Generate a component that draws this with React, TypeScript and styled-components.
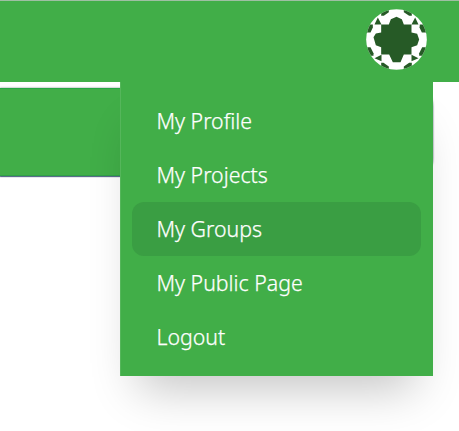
import React from 'react';
import styled, { createGlobalStyle } from 'styled-components';

const GlobalStyle = createGlobalStyle`
  * { box-sizing: border-box; }
  html, body { margin: 0; background: #fff; overflow: hidden; }
  body { font-family: 'Noto Sans', sans-serif; }
`;

const Page = styled.div`
  position: relative;
  width: 459px;
  height: 431px;
  overflow: hidden;
  background: #fff;
`;

const Header = styled.header`
  display: flex;
  justify-content: flex-end;
  align-items: flex-start;
  height: 82px;
  padding: 8px 32px 0 0;
  border-top: 1px solid #9fbfa3;
  background: #41ae48;
`;

const AvatarButton = styled.button`
  width: 61px;
  height: 61px;
  padding: 0;
  border: 0;
  border-radius: 50%;
  background: none;
  svg { display: block; }
`;

const SubHeader = styled.div`
  width: 433px;
  height: 88px;
  margin-top: 6px;
  border-top: 1px solid #27a844;
  border-bottom: 1px solid #2fa047;
  border-radius: 0 18px 18px 0;
  background: #41ae48;
  box-shadow: 0 1px 1px #4b6280, 0 0 2px rgba(40, 60, 60, 0.7);
`;

const Menu = styled.nav`
  position: absolute;
  top: 82px;
  left: 120px;
  width: 313px;
  height: 294px;
  padding: 12px 12px 12px 11px;
  border-left: 1px solid #55b65b;
  background: #41ae48;
  box-shadow: 0 31px 44px -18px rgba(0, 0, 0, 0.23);
`;

const MenuList = styled.ul`
  margin: 0;
  padding: 0;
  list-style: none;
`;

const MenuItem = styled.li<{ $active?: boolean }>`
  height: 54px;
  padding-left: 24.5px;
  border-radius: 12px;
  background: ${(p) => (p.$active ? '#3a9e43' : 'transparent')};
  color: #fff;
  font-size: 21.3px;
  font-weight: 300;
  line-height: 54px;
  -webkit-text-stroke: 0.25px #fff;
`;

const items = ['My Profile', 'My Projects', 'My Groups', 'My Public Page', 'Logout'];

const avatarShapes = [
  // central rosette
  '122,51 138,58 144,74 167,74 167,98 184,102 190,119 184,136 167,142 167,164 144,164 134,187 111,187 100,164 76,164 76,142 60,136 53,112 60,101 76,98 76,74 99,74 105,58',
  // top rim
  '76,48 76,30 99,25 99,37 84,48',
  '144,25 168,30 168,48 160,48 144,37',
  // upper corners and sides
  '66,53 77,74 56,74',
  '178,53 188,74 167,74',
  '28,74 51,74 51,83 44,98 28,98',
  '192,74 216,74 216,98 198,98 191,83',
  // lower corners and sides
  '28,142 44,142 53,160 53,168 28,168',
  '216,142 199,142 190,160 190,168 216,168',
  '56,175 77,165 77,184',
  '188,175 167,165 167,184',
  '76,189 83,189 99,200 99,215 76,215',
  '168,189 160,189 144,200 144,215 168,215',
];

const Avatar = () => (
  <svg width="61" height="61" viewBox="30.5 27.5 183 183" aria-label="Account">
    <defs>
      <clipPath id="round"><circle cx="122" cy="119" r="91" /></clipPath>
    </defs>
    <g clipPath="url(#round)">
      <rect x="30" y="27" width="184" height="184" fill="#fff" />
      {avatarShapes.map((points) => (
        <polygon key={points} points={points} fill="#265a26" />
      ))}
    </g>
  </svg>
);

export default function App() {
  return (
    <>
      <GlobalStyle />
      <Page>
        <Header><AvatarButton><Avatar /></AvatarButton></Header>
        <SubHeader />
        <Menu>
          <MenuList>
            {items.map((item) => (
              <MenuItem key={item} $active={item === 'My Groups'}>{item}</MenuItem>
            ))}
          </MenuList>
        </Menu>
      </Page>
    </>
  );
}
